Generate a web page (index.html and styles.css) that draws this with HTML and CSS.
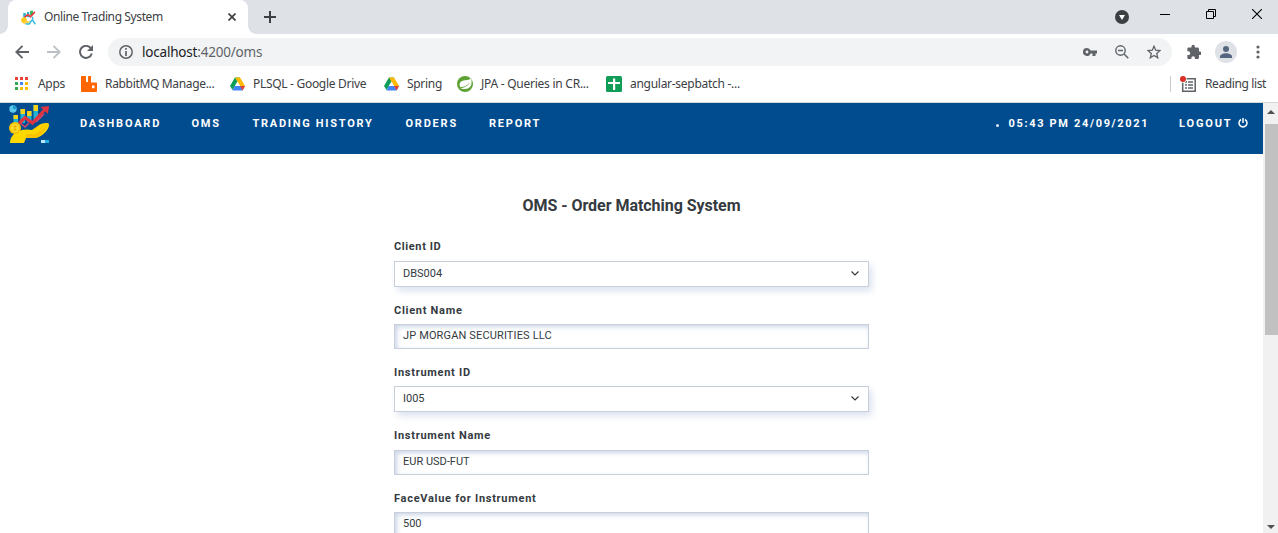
FILE: index.html
```html
<!DOCTYPE html>
<html lang="en">
<head>
<meta charset="utf-8">
<title>Online Trading System</title>
<link rel="stylesheet" href="styles.css">
</head>
<body>
<svg class="defs" width="0" height="0">
  <symbol id="logo" viewBox="0 0 40 38">
    <circle cx="4" cy="4" r="3.700" fill="#5cc8ea"/>
    <path d="M4 4V.3A3.700 3.700 0 0 1 7.700 4z" fill="#1f9fd0"/>
    <path d="M4.500 10H9v9H4.500zM11.500 4H16v14h-4.500zM18 6h4.500v11H18zM24.500 0H29v15h-4.500z" fill="#20b4d4"/>
    <path d="M4.500 10H9v4H4.500zM11.500 4H16v5h-4.500zM18 6h4.500v5H18zM24.500 0H29v6h-4.500z" fill="#f3d21a"/>
    <path d="M10 18.500l6-6 7.500 5.500L35.500 5" fill="none" stroke="#df3341" stroke-width="3.200"/>
    <path d="M31.500 2L40 1l-1 8z" fill="#df3341"/>
    <path d="M12 18.500l4 3.500 4-4M27 17l8-8" fill="none" stroke="#e0476a" stroke-width="1.400"/>
    <path d="M1 38c0-5 3-9 7-11 5-3 10-3 15-2l7-5c3-2 9-3 10-1 .5 5-6 12-13 14H17l-2 5z" fill="#ffd800"/>
    <path d="M17 29h9l10-6.500c1 3-5 9-10 10.500h-9" fill="#fbc200"/>
    <path d="M26 24l4-3M31 24l4-4M35 24l3.500-4" stroke="#e8b400" stroke-width=".8"/>
    <circle cx="6" cy="23" r="6" fill="#ffc400"/>
    <circle cx="6" cy="23" r="4.200" fill="#ffd92e"/>
    <path d="M6 20v6M4.500 21.500h3M4.500 24.500h3" stroke="#e0a800" stroke-width=".8"/>
    <path d="M32 35h8v3h-8z" fill="#20aee5"/>
    <path d="M32 35h4v3h-4z" fill="#b7e9fa"/>
  </symbol>
  <symbol id="drive" viewBox="0 0 16 14">
    <path d="M5.300 0h5.400L5 9.700 2.600 13.500 0 9.200z" fill="#0f9d58"/>
    <path d="M5.300 0h5.400L16 9.200h-5.300z" fill="#ffba00"/>
    <path d="M2.600 13.800L5 9.200h11l-2.600 4.600z" fill="#4285f4"/>
    <path d="M10.700 9.200H16l-2.600 4.600z" fill="#ea4335"/>
    <path d="M8 4.300l2.700 4.900H5.200z" fill="#fff"/>
  </symbol>
</svg>

<div class="tabstrip">
  <div class="tab">
    <svg class="favicon" width="15" height="15" viewBox="0 0 40 40">
      <path d="M6 8h7v12H6zM16 5h6v14h-6z" fill="#28b8d8"/><path d="M24 2h8v12h-8z" fill="#35b85d"/>
      <path d="M9 20l9-8 7 6L37 5" fill="none" stroke="#e43d45" stroke-width="4.500"/>
      <circle cx="8" cy="27" r="7.500" fill="#ffc91f"/><path d="M4 38l9-9h11l5-5-6 12z" fill="#ffd45a"/>
      <path d="M31 18v9l7 11M29 27l-7 10H12" fill="none" stroke="#35bde6" stroke-width="4"/>
    </svg>
    <span class="tab-title">Online Trading System</span>
    <svg class="tab-close" width="8" height="8" viewBox="0 0 8 8"><path d="M.5.5l7 7M7.500.5l-7 7" stroke="#3c4043" stroke-width="1.700"/></svg>
  </div>
  <svg class="new-tab" width="12" height="12" viewBox="0 0 12 12"><path d="M6 0v12M0 6h12" stroke="#3c4043" stroke-width="2"/></svg>
  <div class="window-controls">
    <svg width="14" height="14" viewBox="0 0 14 14"><circle cx="7" cy="7" r="7" fill="#3c4043"/><path d="M4 5h6L7 10z" fill="#fff"/></svg>
    <svg class="minimise" width="10" height="10" viewBox="0 0 10 10"><path d="M0 5.500h10" stroke="#000"/></svg>
    <svg class="restore" width="10" height="10" viewBox="0 0 10 10"><path d="M.5 2.500h7v7h-7zM2.500 2V.5h7v7H8" fill="none" stroke="#000"/></svg>
    <svg class="close" width="10" height="10" viewBox="0 0 10 10"><path d="M0 0l10 10M10 0L0 10" stroke="#000" stroke-width="1.100"/></svg>
  </div>
</div>

<div class="toolbar">
  <svg class="back" width="14" height="14" viewBox="0 0 14 14"><path d="M14 7H1.500M7.500.8L1.300 7l6.200 6.200" fill="none" stroke="#5f6368" stroke-width="1.900"/></svg>
  <svg class="forward" width="14" height="14" viewBox="0 0 14 14"><path d="M0 7h12.500M6.500.8L12.700 7l-6.200 6.200" fill="none" stroke="#bdc1c6" stroke-width="1.900"/></svg>
  <svg class="reload" width="14" height="14" viewBox="0 0 14 14"><path d="M12 3.500A6 6 0 1 0 12.800 8.500" fill="none" stroke="#5f6368" stroke-width="2"/><path d="M14 0v6H8z" fill="#5f6368"/></svg>
  <div class="omnibox">
    <svg width="14" height="14" viewBox="0 0 14 14"><circle cx="7" cy="7" r="6.200" fill="none" stroke="#5f6368" stroke-width="1.500"/><path d="M7 3v1.700M7 6v5" stroke="#5f6368" stroke-width="1.700"/></svg>
    <span class="url"><b>localhost</b>:4200/oms</span>
    <svg class="key" width="14" height="8" viewBox="0 0 14 8"><path d="M4 0a4 4 0 1 0 3.600 5.500H9.500V8h3V5.500H14v-3H7.600A4 4 0 0 0 4 0zm0 2.600a1.400 1.400 0 1 1 0 2.800 1.400 1.400 0 0 1 0-2.800z" fill="#5f6368" fill-rule="evenodd"/></svg>
    <svg class="zoom" width="14" height="14" viewBox="0 0 14 14"><circle cx="5.500" cy="5.500" r="4.700" fill="none" stroke="#5f6368" stroke-width="1.400"/><path d="M3 5.500h5M9 9l4.300 4.300" stroke="#5f6368" stroke-width="1.500"/></svg>
    <svg class="star" width="14" height="14" viewBox="0 0 14 14"><path d="M7 1.200l1.700 4 4.300.4-3.300 2.900 1 4.300L7 10.500l-3.700 2.300 1-4.300L1 5.600l4.300-.4z" fill="none" stroke="#5f6368" stroke-width="1.300"/></svg>
  </div>
  <svg class="puzzle" width="15" height="15" viewBox="0 0 22 22"><path d="M20.500 11H19V7c0-1.100-.9-2-2-2h-4V3.500a2.500 2.500 0 0 0-5 0V5H4a2 2 0 0 0-2 2v3.800h1.500a2.700 2.700 0 0 1 0 5.400H2V20c0 1.100.9 2 2 2h3.800v-1.500a2.700 2.700 0 0 1 5.400 0V22H17a2 2 0 0 0 2-2v-4h1.500a2.500 2.500 0 0 0 0-5z" fill="#5f6368"/></svg>
  <svg class="avatar" width="22" height="22" viewBox="0 0 22 22"><circle cx="11" cy="11" r="11" fill="#dee1e6"/><circle cx="11" cy="8" r="3" fill="#56657f"/><path d="M5 17v-1.500c0-2 3-3.300 6-3.300s6 1.300 6 3.300V17z" fill="#56657f"/></svg>
  <svg class="more" width="4" height="14" viewBox="0 0 4 14"><g fill="#5f6368"><circle cx="2" cy="2" r="1.600"/><circle cx="2" cy="7" r="1.600"/><circle cx="2" cy="12" r="1.600"/></g></svg>
</div>

<div class="bookmarks">
  <a class="bookmark bm-apps"><svg width="13" height="13" viewBox="0 0 13 13"><path d="M0 0h3v3H0zM5 0h3v3H5zM10 0h3v3h-3z" fill="#ea4335"/><path d="M0 5h3v3H0zM0 10h3v3H0z" fill="#34a853"/><path d="M5 5h3v3H5z" fill="#4285f4"/><path d="M10 5h3v3h-3zM5 10h3v3H5zM10 10h3v3h-3z" fill="#fbbc05"/></svg><span>Apps</span></a>
  <a class="bookmark bm-rabbit"><svg width="16" height="16" viewBox="0 0 16 16"><path d="M1 0h3.200c.5 0 .8.300.8.800V6h2V.8c0-.5.300-.8.800-.8H10v6.500h5.200c.5 0 .8.300.8.800V15c0 .6-.4 1-1 1H1c-.6 0-1-.4-1-1V1c0-.6.400-1 1-1zm10 9.500v2.700h2.500V9.500z" fill="#f60"/></svg><span>RabbitMQ Manage...</span></a>
  <a class="bookmark bm-plsql"><svg width="15" height="14"><use href="#drive"/></svg><span>PLSQL - Google Drive</span></a>
  <a class="bookmark bm-spring"><svg width="15" height="14"><use href="#drive"/></svg><span>Spring</span></a>
  <a class="bookmark bm-jpa"><svg width="16" height="16" viewBox="0 0 16 16"><circle cx="8" cy="8" r="8" fill="#5fa134"/><path d="M14 2c2 7-1 11-6 11-2 0-3.500-.3-5-.8C7 12 11 10 13 6c-3 4-6 5-9.500 5.200C1 7.500 4 4.500 8 4.300c3-.1 5-.7 6-2.300z" fill="#fff"/></svg><span>JPA - Queries in CR...</span></a>
  <a class="bookmark bm-sheet"><svg width="16" height="16" viewBox="0 0 16 16"><rect width="16" height="16" rx="1.500" fill="#0f9d58"/><path d="M7 2.500h2.200V6H14v2H9.200v6H7V8H2V6h5z" fill="#fff"/></svg><span>angular-sepbatch -...</span></a>
  <div class="reading-list">
    <svg width="16" height="16" viewBox="0 0 16 16"><path d="M2.700 2.700h12.500v12.500H2.700z" fill="#fff" stroke="#5f6368" stroke-width="1.500"/><path d="M5 6h2M8 6h5M5 9h2M8 9h5M5 12h2M8 12h5" stroke="#5f6368" stroke-width="1.500"/><circle cx="3" cy="3" r="3.700" fill="#fff"/><circle cx="3" cy="3" r="3" fill="#d93025"/></svg>
    <span>Reading list</span>
  </div>
</div>

<div class="viewport">
  <div class="page">
    <nav class="navbar">
      <svg class="logo" width="40" height="38"><use href="#logo"/></svg>
      <a class="n-dashboard">DASHBOARD</a>
      <a class="n-oms">OMS</a>
      <a class="n-history">TRADING HISTORY</a>
      <a class="n-orders">ORDERS</a>
      <a class="n-report">REPORT</a>
      <i class="dot"></i>
      <span class="clock">05:43 PM 24/09/2021</span>
      <a class="logout">LOGOUT</a>
      <svg class="power" width="10" height="10" viewBox="0 0 10 10"><path d="M3 1.500a4 4 0 1 0 4 0M5 0v5" fill="none" stroke="#fff" stroke-width="1.500"/></svg>
    </nav>
    <main class="form">
      <h1>OMS - Order Matching System</h1>
      <label class="l1">Client ID</label>
      <div class="control select"><span class="v1">DBS004</span><svg width="8" height="5" viewBox="0 0 8 5"><path d="M.5.500L4 4 7.500.5" fill="none" stroke="#343a40" stroke-width="1.200"/></svg></div>
      <label class="l2">Client Name</label>
      <div class="control input"><span class="v2">JP MORGAN SECURITIES LLC</span></div>
      <label class="l3">Instrument ID</label>
      <div class="control select"><span class="v3">I005</span><svg width="8" height="5" viewBox="0 0 8 5"><path d="M.5.500L4 4 7.500.5" fill="none" stroke="#343a40" stroke-width="1.200"/></svg></div>
      <label class="l4">Instrument Name</label>
      <div class="control input"><span class="v4">EUR USD-FUT</span></div>
      <label class="l5">FaceValue for Instrument</label>
      <div class="control input"><span class="v5">500</span></div>
    </main>
  </div>
  <div class="scrollbar">
    <svg width="8" height="4" viewBox="0 0 8 4"><path d="M0 4h8L4 0z" fill="#505050"/></svg>
    <div class="thumb"></div>
    <svg class="down" width="8" height="4" viewBox="0 0 8 4"><path d="M0 0h8L4 4z" fill="#505050"/></svg>
  </div>
</div>
</body>
</html>
```
FILE: styles.css
```css
* { box-sizing: border-box; }
body { margin: 0; width: 1278px; height: 533px; overflow: hidden; background: #fff; font-family: "Noto Sans", sans-serif; font-size: 12px; color: #3c4043; display: flex; flex-direction: column; }
svg { display: block; flex: none; }
.defs { position: absolute; }
span, a, label { white-space: nowrap; }

.tabstrip { height: 34px; flex: none; background: #dee1e6; display: flex; }
.tab { position: relative; width: 240px; height: 34px; margin-left: 8px; background: #fff; border-radius: 8px 8px 0 0; display: flex; align-items: center; padding-left: 13px; }
.tab::before, .tab::after { content: ""; position: absolute; bottom: 0; width: 8px; height: 8px; }
.tab::before { left: -8px; background: radial-gradient(circle at 0 0, transparent 7.500px, #fff 8px); }
.tab::after { right: -8px; background: radial-gradient(circle at 100% 0, transparent 7.500px, #fff 8px); }
.tab-title { margin-left: 8px; width: 184px; line-height: 16px; letter-spacing: -0.39px; }
.new-tab { margin: 11px 0 0 16px; }
.window-controls { margin-left: auto; display: flex; padding: 10px 16px 0 0; }
.window-controls > :first-child { margin-right: -1px; }
.minimise { margin: -1px 0 0 32px; }
.restore { margin: -1px 0 0 36px; }
.close { margin: -1px 0 0 36px; }

.toolbar { height: 36px; flex: none; display: flex; align-items: center; padding-left: 15px; }
.forward { margin-left: 18px; }
.reload { margin-left: 18px; }
.omnibox { width: 1064px; height: 28px; margin-left: 15px; background: #f1f3f4; border-radius: 14px; display: flex; align-items: center; padding: 0 11px; }
.url { margin-left: 9px; font-size: 13.500px; color: #5f6368; letter-spacing: -0.2px; }
.url b { font-weight: 400; color: #202124; }
.key { margin-left: auto; }
.zoom { margin-left: 18px; }
.star { margin-left: 18px; }
.puzzle { margin: -2px 0 0 14px; }
.avatar { margin-left: 14px; }
.more { margin-left: 19px; }

.bookmarks { height: 33px; flex: none; display: flex; align-items: center; padding: 0 12px 5px 15px; border-bottom: 1px solid #d5d7da; letter-spacing: -0.3px; }
.bookmark { display: flex; align-items: center; gap: 8px; }
.bm-apps { width: 66px; gap: 10px; }
.bm-rabbit { width: 149px; letter-spacing: -0.33px; }
.bm-plsql { width: 154px; letter-spacing: -0.3px; }
.bm-spring { width: 73px; }
.bm-jpa { width: 149px; letter-spacing: -0.25px; }
.bm-sheet { letter-spacing: -0.28px; }
.reading-list { margin-left: auto; width: 96px; height: 16px; border-left: 1px solid #c6c9cd; display: flex; align-items: center; gap: 9px; padding-left: 9px; letter-spacing: -0.38px; }

.viewport { flex: 1; min-height: 0; display: flex; }
.page { width: 1263px; font-family: Roboto, sans-serif; overflow: hidden; }
.navbar { height: 51px; background: #004c8f; color: #fff; display: flex; align-items: center; padding: 0 0 10px 9px; font-size: 11px; font-weight: 700; letter-spacing: 1.78px; }
.logo { margin: 2px 31px 0 0; align-self: flex-start; }
.n-dashboard { width: 111.500px; }
.n-oms { width: 61px; }
.n-history { width: 153px; letter-spacing: 1.72px; }
.n-orders { width: 83.500px; }
.dot { width: 3px; height: 3px; border-radius: 50%; background: #dce8f3; margin: 3px 10px 0 auto; }
.clock { width: 170.500px; letter-spacing: 1.66px; }
.logout { width: 59px; letter-spacing: 1.85px; }
.power { margin: -1px 15px 0 0; }

.form { width: 475px; margin-left: 394px; color: #343a40; display: flex; flex-direction: column; }
h1 { font-size: 16px; line-height: 20px; margin: 42px 0 0; text-align: center; font-weight: 700; letter-spacing: -0.04px; }
label { height: 14px; line-height: 14px; font-size: 11px; font-weight: 700; letter-spacing: 0.72px; }
.l1 { margin: 24px 0 7px; letter-spacing: 0.6px; }
.l2 { margin: 17px 0 6px; }
.l3 { margin: 17px 0 6px; }
.l4 { margin: 17px 0 7px; }
.l5 { margin: 17px 0 6px; }
.control { border: 1px solid #c9cfda; display: flex; justify-content: space-between; align-items: center; padding: 0 9px 2px 8px; font-size: 11px; flex: none; }
.v2 { letter-spacing: 0.14px; }
.select { height: 26px; box-shadow: 3px 4px 7px #dce3ef; }
.input { height: 25px; box-shadow: inset 2px 2px 5px #cbd6e6; }

.scrollbar { width: 15px; background: #f1f1f1; display: flex; flex-direction: column; align-items: center; padding-top: 7px; }
.thumb { width: 13px; height: 211px; background: #c1c1c1; margin: 10px 0 0 2px; }
.down { margin-top: auto; margin-bottom: 4px; }
```
